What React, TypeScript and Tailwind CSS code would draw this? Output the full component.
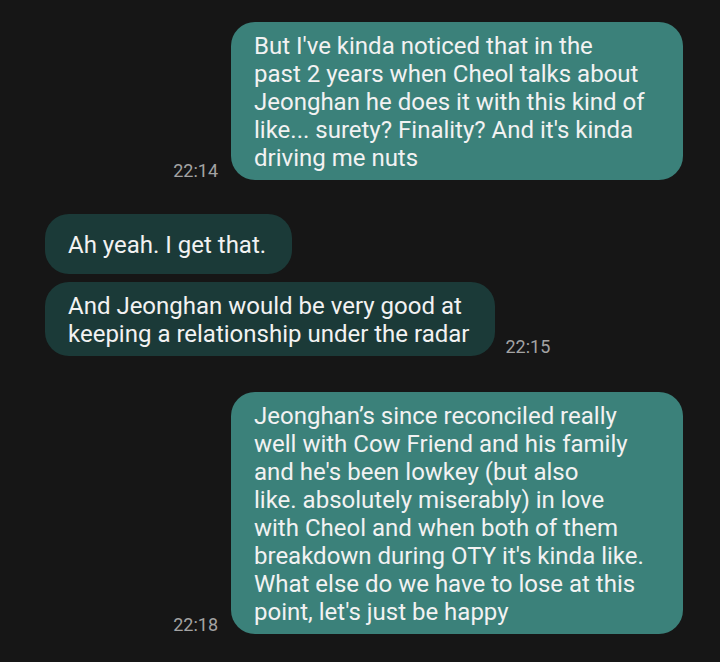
import React from 'react';

type Msg = {
  from: 'me' | 'them';
  lines: string[];
  time?: string;
};

const messages: Msg[] = [
  {
    from: 'me',
    time: '22:14',
    lines: [
      "But I've kinda noticed that in the",
      'past 2 years when Cheol talks about',
      'Jeonghan he does it with this kind of',
      "like... surety? Finality? And it's kinda",
      'driving me nuts',
    ],
  },
  { from: 'them', lines: ['Ah yeah. I get that.'] },
  {
    from: 'them',
    time: '22:15',
    lines: ['And Jeonghan would be very good at', 'keeping a relationship under the radar'],
  },
  {
    from: 'me',
    time: '22:18',
    lines: [
      'Jeonghan\u2019s since reconciled really',
      'well with Cow Friend and his family',
      "and he's been lowkey (but also",
      'like. absolutely miserably) in love',
      'with Cheol and when both of them',
      "breakdown during OTY it's kinda like.",
      'What else do we have to lose at this',
      "point, let's just be happy",
    ],
  },
];

const Time = ({ t }: { t: string }) => (
  <span className="text-[18px] leading-[18px] text-[#a3a3a3] shrink-0">{t}</span>
);

const Bubble = ({ msg }: { msg: Msg }) => {
  const mine = msg.from === 'me';
  return (
    <div
      className={
        mine
          ? 'w-[452px] min-h-[60px] rounded-[24px] bg-[#3b817a] pl-[23px] pr-[20px] pt-[10px] pb-[8px] flex flex-col justify-center'
          : 'w-fit min-h-[60px] rounded-[24px] bg-[#1b3a38] pl-[23px] pr-[26px] pt-[10px] pb-[8px] flex flex-col justify-center'
      }
    >
      {msg.lines.map((l, i) => (
        <span key={i} className="block whitespace-nowrap text-[24px] leading-[28px] text-[#f2f2f2]">
          {l}
        </span>
      ))}
    </div>
  );
};

export default function App() {
  return (
    <div
      className="w-[720px] h-[662px] bg-[#161616] overflow-hidden pt-[22px] flex flex-col"
      style={{ fontFamily: 'Roboto, "Noto Sans", sans-serif' }}
    >
      {/* sent */}
      <div className="flex justify-end items-end gap-[13px] pr-[37px]">
        <Time t={messages[0].time!} />
        <Bubble msg={messages[0]} />
      </div>

      {/* received */}
      <div className="flex flex-col gap-[8px] pl-[45px] mt-[34px]">
        <Bubble msg={messages[1]} />
        <div className="flex items-end gap-[10px]">
          <Bubble msg={messages[2]} />
          <Time t={messages[2].time!} />
        </div>
      </div>

      {/* sent */}
      <div className="flex justify-end items-end gap-[13px] pr-[37px] mt-[36px]">
        <Time t={messages[3].time!} />
        <Bubble msg={messages[3]} />
      </div>
    </div>
  );
}
